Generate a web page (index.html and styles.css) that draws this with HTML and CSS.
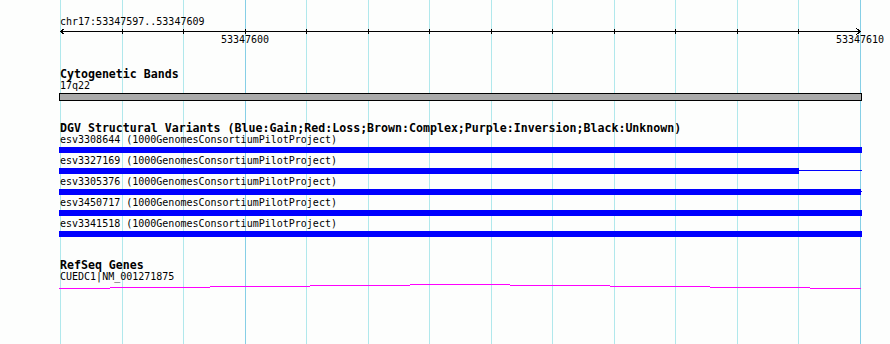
FILE: index.html
```html
<!DOCTYPE html>
<html lang="en">
<head>
  <meta charset="UTF-8" />
  <title>chr17:53347597..53347609</title>
  <link rel="stylesheet" href="styles.css">
</head>
<body>
  <div class="browser">
    <!-- grid behind all tracks -->
    <svg class="grid" width="890" height="344">
      <line x1="60.5" y1="0" x2="60.5" y2="344" />
      <line x1="122.5" y1="0" x2="122.5" y2="344" />
      <line x1="183.5" y1="0" x2="183.5" y2="344" />
      <line class="major" x1="245.5" y1="0" x2="245.5" y2="344" />
      <line x1="306.5" y1="0" x2="306.5" y2="344" />
      <line x1="368.5" y1="0" x2="368.5" y2="344" />
      <line x1="429.5" y1="0" x2="429.5" y2="344" />
      <line x1="491.5" y1="0" x2="491.5" y2="344" />
      <line x1="552.5" y1="0" x2="552.5" y2="344" />
      <line x1="614.5" y1="0" x2="614.5" y2="344" />
      <line x1="675.5" y1="0" x2="675.5" y2="344" />
      <line x1="737.5" y1="0" x2="737.5" y2="344" />
      <line x1="798.5" y1="0" x2="798.5" y2="344" />
      <line class="major" x1="860.5" y1="0" x2="860.5" y2="344" />
    </svg>

    <div class="tracks">
      <div class="ruler">
        <div class="location">chr17:53347597..53347609</div>
        <svg class="scale" width="890" height="18">
          <line x1="60" y1="3.5" x2="861" y2="3.5" />
          <polyline points="64.5,0.5 60.5,3.5 64.5,6.5" />
          <polyline points="856.5,0.5 860.5,3.5 856.5,6.5" />
          <line x1="122.5" y1="1" x2="122.5" y2="6" />
          <line x1="183.5" y1="1" x2="183.5" y2="6" />
          <line x1="245.5" y1="1" x2="245.5" y2="6" />
          <line x1="306.5" y1="1" x2="306.5" y2="6" />
          <line x1="368.5" y1="1" x2="368.5" y2="6" />
          <line x1="429.5" y1="1" x2="429.5" y2="6" />
          <line x1="491.5" y1="1" x2="491.5" y2="6" />
          <line x1="552.5" y1="1" x2="552.5" y2="6" />
          <line x1="614.5" y1="1" x2="614.5" y2="6" />
          <line x1="675.5" y1="1" x2="675.5" y2="6" />
          <line x1="737.5" y1="1" x2="737.5" y2="6" />
          <line x1="798.5" y1="1" x2="798.5" y2="6" />
          <text x="245" y="15">53347600</text>
          <text x="860" y="15">53347610</text>
        </svg>
      </div>

      <div class="track cyto">
        <div class="track-title">Cytogenetic Bands</div>
        <div class="feature-label">17q22</div>
        <div class="band"></div>
      </div>

      <div class="track dgv">
        <div class="track-title">DGV Structural Variants (Blue:Gain;Red:Loss;Brown:Complex;Purple:Inversion;Black:Unknown)</div>
        <div class="variant">
          <div class="feature-label">esv3308644 (1000GenomesConsortiumPilotProject)</div>
          <div class="feature"><div class="thick" style="width:803px"></div></div>
        </div>
        <div class="variant">
          <div class="feature-label">esv3327169 (1000GenomesConsortiumPilotProject)</div>
          <div class="feature"><div class="thick" style="width:740px"></div><div class="thin" style="width:63px"></div></div>
        </div>
        <div class="variant">
          <div class="feature-label">esv3305376 (1000GenomesConsortiumPilotProject)</div>
          <div class="feature"><div class="thick" style="width:802px"></div><div class="thin" style="width:1px"></div></div>
        </div>
        <div class="variant">
          <div class="feature-label">esv3450717 (1000GenomesConsortiumPilotProject)</div>
          <div class="feature"><div class="thick" style="width:803px"></div></div>
        </div>
        <div class="variant">
          <div class="feature-label">esv3341518 (1000GenomesConsortiumPilotProject)</div>
          <div class="feature"><div class="thick" style="width:803px"></div></div>
        </div>
      </div>

      <div class="track refseq">
        <div class="track-title">RefSeq Genes</div>
        <div class="feature-label">CUEDC1|NM_001271875</div>
        <svg class="gene" width="890" height="7">
          <line x1="59" y1="5.5" x2="110" y2="5.5" />
          <line x1="110" y1="4.5" x2="210" y2="4.5" />
          <line x1="210" y1="3.5" x2="310" y2="3.5" />
          <line x1="310" y1="2.5" x2="410" y2="2.5" />
          <line x1="410" y1="1.5" x2="510" y2="1.5" />
          <line x1="510" y1="2.5" x2="610" y2="2.5" />
          <line x1="610" y1="3.5" x2="710" y2="3.5" />
          <line x1="710" y1="4.5" x2="810" y2="4.5" />
          <line x1="810" y1="5.5" x2="861" y2="5.5" />
        </svg>
      </div>
    </div>
  </div>
</body>
</html>
```

FILE: styles.css
```css
body {
  margin: 0;
  padding: 0;
  background-color: #fdfefd;
  font-family: "DejaVu Sans Mono", "Liberation Mono", monospace;
  color: #000;
}
.browser {
  position: relative;
  width: 890px;
  height: 344px;
  overflow: hidden;
  background-color: #fdfefd;
}
.grid {
  position: absolute;
  top: 0;
  left: 0;
  z-index: 0;
}
.grid line {
  stroke: #b0e8ec;
  stroke-width: 1;
  shape-rendering: crispEdges;
}
.grid line.major {
  stroke: #86cfe6;
}
.tracks {
  position: relative;
  z-index: 1;
}
.ruler {
  padding-top: 17px;
}
.location {
  padding-left: 60px;
  font-size: 10px;
  line-height: 10px;
}
.scale {
  display: block;
  margin-top: 1px;
}
.scale line,
.scale polyline {
  stroke: #000;
  stroke-width: 1;
  fill: none;
  shape-rendering: crispEdges;
}
.scale text {
  font-family: "DejaVu Sans Mono", "Liberation Mono", monospace;
  font-size: 10px;
  text-anchor: middle;
  fill: #000;
}
.track-title {
  padding-left: 60px;
  font-size: 11.6px;
  line-height: 12px;
  font-weight: bold;
  white-space: nowrap;
}
.feature-label {
  margin-top: 1px;
  padding-left: 60px;
  font-size: 10px;
  line-height: 10px;
  white-space: nowrap;
}
.cyto {
  margin-top: 22px;
}
.band {
  margin-top: 2px;
  margin-left: 59px;
  width: 801px;
  height: 6px;
  background-color: #aaaaaa;
  border: 1px solid #000;
}
.dgv {
  margin-top: 21px;
}
.variant {
  padding-bottom: 3px;
}
.variant .feature-label {
  margin-top: 1px;
  margin-bottom: 0;
}
.variant + .variant .feature-label {
  margin-top: 0;
}
.feature {
  display: flex;
  align-items: flex-start;
  margin-top: 2px;
  margin-left: 59px;
  height: 6px;
}
.thick {
  height: 6px;
  background-color: #0000ff;
}
.thin {
  height: 1px;
  margin-top: 2px;
  background-color: #0000ff;
}
.refseq {
  margin-top: 19px;
}
.gene {
  display: block;
  margin-top: 1px;
}
.gene line {
  stroke: #ff00ff;
  stroke-width: 1;
  shape-rendering: crispEdges;
}
```
